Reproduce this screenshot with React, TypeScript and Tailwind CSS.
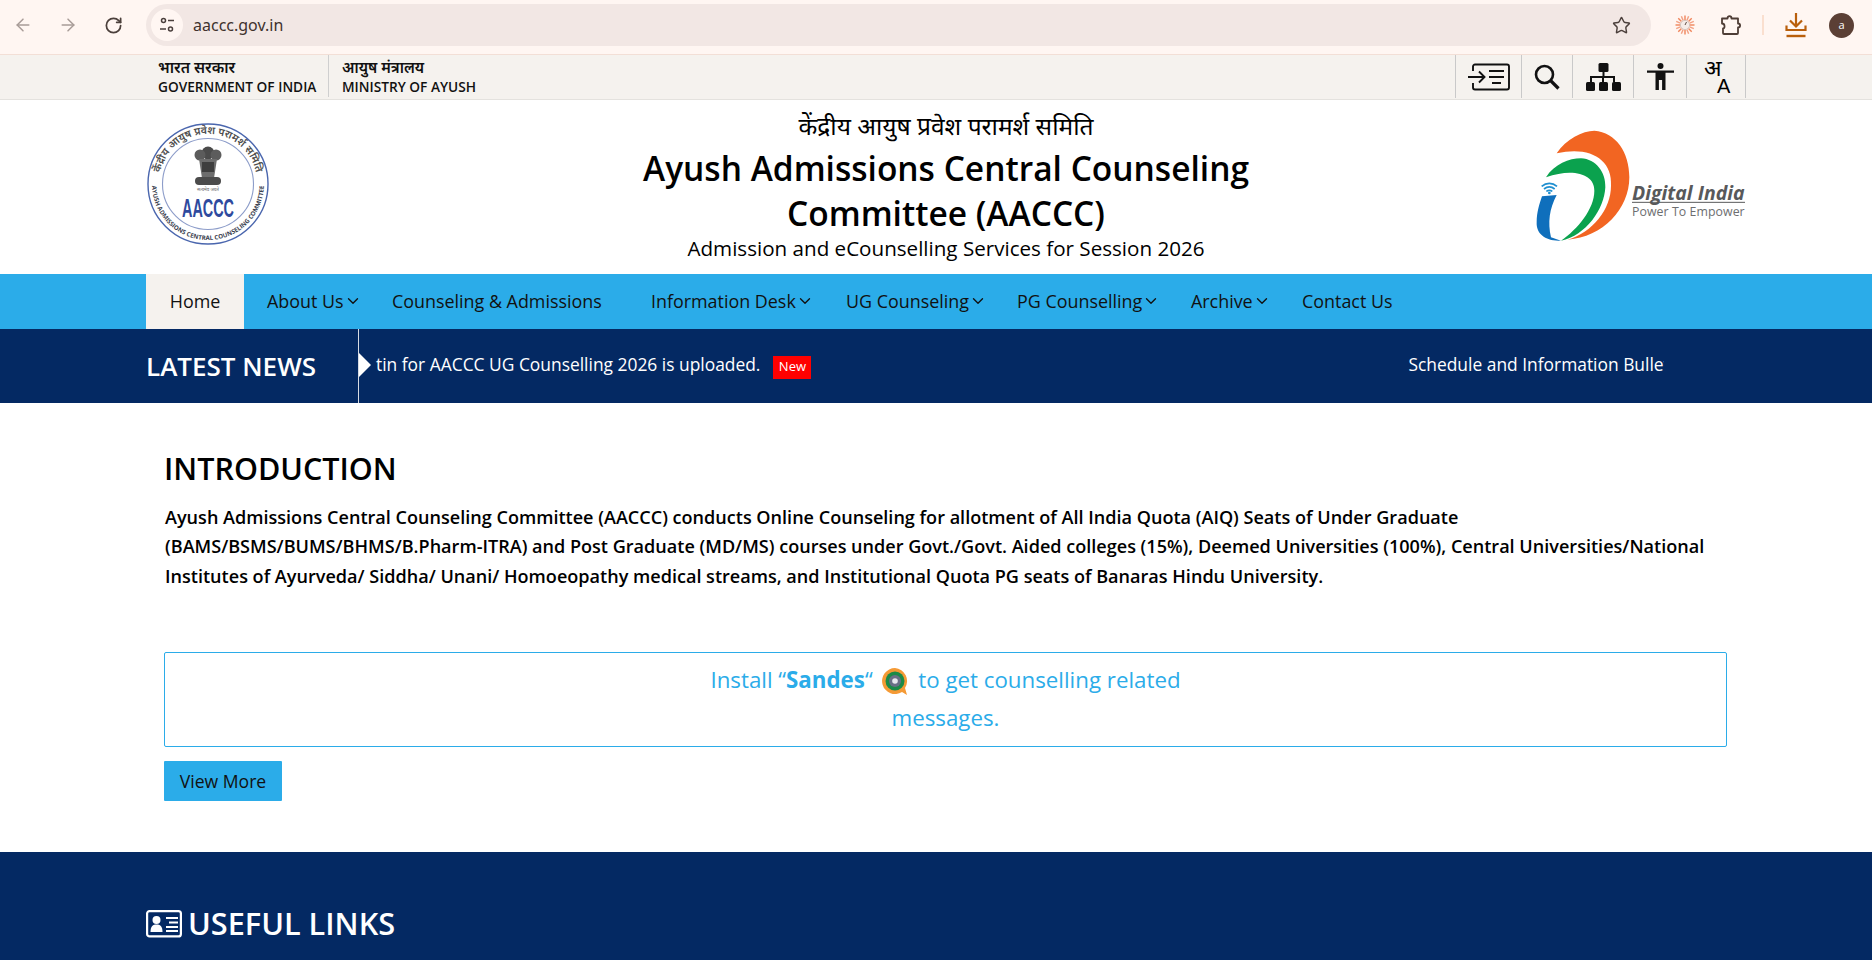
import { ArrowLeft, ArrowRight, RotateCw, Star, ChevronDown } from "lucide-react";

const font = { fontFamily: '"Open Sans","Noto Sans",sans-serif' };

function SiteTune() {
  return (
    <svg width="16" height="16" viewBox="0 0 16 16" fill="none" stroke="#4a3f3c" strokeWidth="1.5">
      <circle cx="4.5" cy="3.5" r="2" />
      <path d="M9 3.5h6M1 12h6" />
      <circle cx="11.5" cy="12" r="2" />
    </svg>
  );
}

function Sun() {
  const rays = Array.from({ length: 16 }, (_, i) => i * 22.5);
  return (
    <svg width="22" height="22" viewBox="0 0 22 22">
      {rays.map((r) => (
        <line key={r} x1="11" y1="1.5" x2="11" y2="6" stroke={r % 45 === 0 ? "#f0845a" : "#f3a184"} strokeWidth="1.4" transform={`rotate(${r} 11 11)`} />
      ))}
      <circle cx="11" cy="11" r="4.6" fill="#f5ece8" stroke="#c9b8b0" strokeWidth="0.8" />
      <path d="M11 11l1.5-3" stroke="#5d4a42" strokeWidth="1" />
    </svg>
  );
}

function Puzzle() {
  return (
    <svg width="22" height="22" viewBox="0 0 22 22" fill="none" stroke="#4e3d36" strokeWidth="1.8" strokeLinejoin="round">
      <path d="M2 4.5h5.5c0-3.2 4-3.2 4 0H18v5c2.8 0 2.8 4 0 4V19a1 1 0 0 1-1 1H4a1 1 0 0 1-1-1v-4.5c2.2 0 2.2-5-1-5z" />
    </svg>
  );
}

function Download() {
  return (
    <svg width="22" height="26" viewBox="0 0 22 26" fill="none" stroke="#b95f0c" strokeWidth="2.2">
      <path d="M11 1v13M5 8.5l6 6 6-6M1.5 13.5v4.5h19v-4.5" />
      <path d="M1.5 24h19" strokeWidth="2.4" />
    </svg>
  );
}

function SkipIcon() {
  return (
    <svg width="42" height="28" viewBox="0 0 42 28" fill="none" stroke="#111" strokeWidth="1.9">
      <path d="M5 8V3.5A2 2 0 0 1 7 1.5h32a2 2 0 0 1 2 2v21a2 2 0 0 1-2 2H7a2 2 0 0 1-2-2V20" />
      <path d="M0 14h16M11 8.5l5.5 5.5-5.5 5.5M21 8h15M21 14h15M24 20h9" />
    </svg>
  );
}

function SearchIcon() {
  return (
    <svg width="26" height="26" viewBox="0 0 26 26" fill="none" stroke="#111" strokeWidth="2.6">
      <circle cx="10.5" cy="10.5" r="8.5" />
      <path d="M16.5 16.5l8 8" strokeWidth="3.2" />
    </svg>
  );
}

function SitemapIcon() {
  return (
    <svg width="35" height="28" viewBox="0 0 35 28" fill="#111">
      <rect x="12.5" y="0" width="10" height="9" rx="1.5" />
      <rect x="0" y="19" width="9" height="9" rx="1.5" />
      <rect x="13" y="19" width="9" height="9" rx="1.5" />
      <rect x="26" y="19" width="9" height="9" rx="1.5" />
      <path d="M16.5 9h2v4h10.5v6h-2v-4h-9v4h-2v-4H6v4H4v-6h12.5z" />
    </svg>
  );
}

function AccessIcon() {
  return (
    <svg width="27" height="28" viewBox="0 0 27 28" fill="#111">
      <circle cx="13.5" cy="3" r="3" />
      <path d="M0 7.5h27v2.2h-8.5V27h-3.4V17h-3.2v10H8.500V9.700H0z" />
    </svg>
  );
}

function Seal() {
  return (
    <svg width="122" height="122" viewBox="0 0 122 122">
      <circle cx="61" cy="61" r="60" fill="#fff" stroke="#4a66ae" strokeWidth="1.4" />
      <circle cx="61" cy="61" r="45.500" fill="#fff" stroke="#8c9cc9" strokeWidth="1.1" />
      <defs>
        <path id="sealTop" d="M14 46a49 49 0 0 1 94 0" />
        <path id="sealBottom" d="M6.100 50A56 56 0 1 0 115.900 50" />
      </defs>
      <text fontSize="10.500" fill="#4d4d4d" fontFamily='"Noto Sans","Open Sans",sans-serif' fontWeight="600">
        <textPath href="#sealTop" startOffset="50%" textAnchor="middle">केंद्रीय आयुष प्रवेश परामर्श समिति</textPath>
      </text>
      <text fontSize="6.200" fill="#3b3f50" fontFamily='"Open Sans",sans-serif' fontWeight="700">
        <textPath href="#sealBottom" startOffset="50%" textAnchor="middle">AYUSH ADMISSIONS CENTRAL COUNSELING COMMITTEE</textPath>
      </text>
      <g fill="#4b4b4b">
        <circle cx="61" cy="30" r="6.500" />
        <circle cx="53" cy="32" r="5.500" fill="#5c5c5c" />
        <circle cx="69" cy="32" r="5.500" fill="#5c5c5c" />
        <path d="M52 36h18l-3 19h-12z" fill="#6d6d6d" />
        <rect x="48" y="54" width="26" height="8" rx="4" />
        <rect x="55" y="39" width="12" height="10" fill="#3e3e3e" />
      </g>
      <text x="61" y="68" textAnchor="middle" fontSize="4.500" fill="#666" fontFamily='"Noto Sans",sans-serif'>सत्यमेव जयते</text>
      <text x="61" y="94" textAnchor="middle" fontSize="25" fontWeight="700" fill="#2e4a9e" textLength="52" lengthAdjust="spacingAndGlyphs" fontFamily='"Liberation Sans",sans-serif'>AACCC</text>
    </svg>
  );
}

function DigitalIndia() {
  return (
    <svg width="220" height="120" viewBox="0 0 660 360">
      <path d="M62 73C90 30 140 5 175 5c65 5 105 65 105 140 0 95-80 180-185 187 75-22 130-92 130-162 5-80-65-120-163-97z" fill="#f26522" />
      <path d="M30 145c25-40 70-57 105-57 45 2 75 42 73 87-3 65-58 145-133 160 50-35 100-95 100-150 2-50-65-70-145-40z" fill="#0ba24e" />
      <path d="M18 202l44-4c-22 42-27 82-17 127l30 10c-45 3-75-20-73-55 0-30 8-55 16-78z" fill="#0f6fbc" />
      <g fill="none" stroke="#1f8fd0" strokeWidth="5">
        <path d="M17 172c14-12 32-12 46 0M24 180c10-8 22-8 32 0M31 187c6-4 12-4 18 0" />
      </g>
      <circle cx="40" cy="192" r="4" fill="#1f8fd0" />
      <text x="288" y="213" fontSize="58" fontWeight="700" fontStyle="italic" fill="#58595b" textLength="338" lengthAdjust="spacingAndGlyphs" fontFamily='"Open Sans",sans-serif'>Digital India</text>
      <line x1="288" y1="220" x2="627" y2="220" stroke="#58595b" strokeWidth="3" />
      <text x="288" y="261" fontSize="37" fill="#6d6e70" textLength="338" fontFamily='"Open Sans",sans-serif'>Power To Empower</text>
    </svg>
  );
}

function SandesIcon() {
  return (
    <svg width="28" height="30" viewBox="0 0 28 30" className="inline-block align-middle mx-[3px]">
      <path d="M14 1a13 13 0 1 0 7 24l5 3-2-7A13 13 0 0 0 14 1z" fill="#f59a35" />
      <circle cx="14" cy="14" r="9.500" fill="#1c8a48" />
      <circle cx="14" cy="14" r="6" fill="#6a6f86" />
      <circle cx="14" cy="14" r="2.800" fill="#e9e9ef" />
    </svg>
  );
}

function IdIcon() {
  return (
    <svg width="36" height="28" viewBox="0 0 36 28" fill="none">
      <rect x="1.100" y="1.100" width="33.800" height="25.300" rx="2.500" stroke="#fff" strokeWidth="2.200" />
      <circle cx="10.500" cy="10" r="4" fill="#fff" />
      <path d="M4.500 22c0-6 2.500-7.500 6-7.500s6 1.500 6 7.500z" fill="#fff" />
      <path d="M20 8h12M23 12.500h9M20 17h12M20 21h12" stroke="#fff" strokeWidth="2" />
    </svg>
  );
}

const navItems: [string, boolean, string][] = [
  ["About Us", true, "w-[125px]"],
  ["Counseling & Admissions", false, "w-[259px]"],
  ["Information Desk", true, "w-[195px]"],
  ["UG Counseling", true, "w-[171px]"],
  ["PG Counselling", true, "w-[174px]"],
  ["Archive", true, "w-[111px]"],
  ["Contact Us", false, ""],
];

function Sep() {
  return <div className="w-px h-full bg-[#c9c9c9]" />;
}

export default function App() {
  return (
    <div className="w-[1872px] h-[960px] overflow-hidden bg-white text-black" style={font}>
      <div className="h-[55px] bg-[#fff6f2] border-b border-[#f3dfd6] flex items-center pb-[4px] text-[#6b5b55]">
        <div className="flex items-center w-[146px] pl-[13px] shrink-0">
          <ArrowLeft size={20} strokeWidth={1.8} className="text-[#a89c98]" />
          <ArrowRight size={20} strokeWidth={1.8} className="ml-[25px] text-[#a89c98]" />
          <RotateCw size={19} strokeWidth={2.2} className="ml-[26px] text-[#4c403c]" />
        </div>
        <div className="w-[1505px] h-[42px] rounded-full bg-[#f2e7e4] flex items-center pl-[5px] pr-[20px] shrink-0">
          <div className="w-8 h-8 rounded-full bg-[#fff6f2] flex items-center justify-center">
            <SiteTune />
          </div>
          <span className="ml-[10px] text-[16px] text-[#40322d]" style={{ fontFamily: '"Noto Sans",sans-serif' }}>aaccc.gov.in</span>
          <Star size={19} strokeWidth={1.8} className="ml-auto text-[#4c403c]" />
        </div>
        <div className="flex items-center pl-[23px]">
          <Sun />
          <div className="ml-[24px]"><Puzzle /></div>
          <div className="ml-[20px] w-[2px] h-5 bg-[#fadfcf]" />
          <div className="ml-[21px]"><Download /></div>
          <div className="ml-[22px] w-[25px] h-[25px] rounded-full bg-[#5b3f35] text-white text-[11px] flex items-center justify-center">a</div>
        </div>
      </div>

      <div className="h-[45px] bg-[#f5f2ee] border-b border-[#e4e2de] pl-[158px] flex">
        <div className="w-[171px] flex flex-col text-[13.700px] leading-[19px] font-semibold pt-[3px] border-r border-[#cfcfcf] mb-[2px] text-[#111]">
          <span className="text-[15.500px]" style={{ fontFamily: '"Noto Sans","Open Sans",sans-serif' }}>भारत सरकार</span>
          <span className="whitespace-nowrap">GOVERNMENT OF INDIA</span>
        </div>
        <div className="ml-[13px] flex flex-col text-[13.700px] leading-[19px] font-semibold pt-[3px] text-[#111]">
          <span className="text-[15.200px]" style={{ fontFamily: '"Noto Sans","Open Sans",sans-serif' }}>आयुष मंत्रालय</span>
          <span>MINISTRY OF AYUSH</span>
        </div>
        <div className="ml-auto mr-[126px] flex h-[43px]">
          <Sep />
          <div className="w-[65px] flex items-center justify-center"><SkipIcon /></div>
          <Sep />
          <div className="w-[50px] flex items-center justify-center"><SearchIcon /></div>
          <Sep />
          <div className="w-[60px] flex items-center justify-center"><SitemapIcon /></div>
          <Sep />
          <div className="w-[52px] flex items-center justify-center"><AccessIcon /></div>
          <Sep />
          <div className="w-[58px] relative leading-none">
            <span className="absolute left-[17px] top-[1px] text-[23px] leading-none" style={{ fontFamily: '"Noto Sans",sans-serif' }}>अ</span>
            <span className="absolute left-[30px] top-[21px] text-[20px] leading-none font-normal" style={{ fontFamily: '"Liberation Sans",sans-serif' }}>A</span>
          </div>
          <Sep />
        </div>
      </div>

      <div className="h-[174px] pl-[147px] flex items-start">
        <div className="w-[122px] pt-[23px] shrink-0"><Seal /></div>
        <div className="w-[800px] ml-[277px] text-center pt-[9px] shrink-0">
          <div className="text-[24.500px] leading-[34px]" style={{ fontFamily: '"Noto Sans","Open Sans",sans-serif' }}>केंद्रीय आयुष प्रवेश परामर्श समिति</div>
          <div className="text-[33.500px] leading-[45px] font-semibold w-[640px] mx-auto mt-[3px]">Ayush Admissions Central Counseling Committee (AACCC)</div>
          <div className="text-[20.600px] leading-[24px] font-medium">Admission and eCounselling Services for Session 2026</div>
        </div>
        <div className="ml-[190px] pt-[29px] shrink-0"><DigitalIndia /></div>
      </div>

      <div className="h-[55px] bg-[#2bace9] pl-[146px] flex items-stretch text-[17.900px] font-medium text-[#111]">
        <div className="w-[98px] bg-[#f5f2ee] flex items-center justify-center">Home</div>
        <div className="flex items-center pl-[23px]">
          {navItems.map(([label, chev, w]) => (
            <div key={label} className={`flex items-center whitespace-nowrap ${w}`}>
              {label}
              {chev && <ChevronDown size={18} strokeWidth={1.8} />}
            </div>
          ))}
        </div>
      </div>

      <div className="h-[74px] bg-[#042963] pl-[146px] flex text-white">
        <div className="w-[212px] flex items-center text-[26px] font-semibold leading-none shrink-0">LATEST NEWS</div>
        <div className="relative w-[1306px] border-l border-[#d7dbe3] flex items-center pl-[17px] overflow-hidden whitespace-nowrap text-[17.400px] shrink-0">
          <div className="absolute left-0 top-[24px] w-0 h-0 border-y-[12px] border-y-transparent border-l-[12px] border-l-white" />
          <span className="pb-[3px]">tin for AACCC UG Counselling 2026 is uploaded.</span>
          <span className="ml-[13px] w-[38px] h-[23px] bg-[#ff0000] text-[13px] flex items-center justify-center shrink-0 mt-[2px]">New</span>
          <span className="ml-[597px] pb-[3px]">Schedule and Information Bulletin for AACCC</span>
        </div>
      </div>

      <div className="h-[449px] pl-[164px] pr-[145px] pt-[45px] flex flex-col items-start">
        <h2 className="text-[30.500px] leading-[40px] font-semibold">INTRODUCTION</h2>
        <p className="mt-[15px] ml-px text-[18.070px] leading-[29.300px] font-semibold whitespace-nowrap">
          Ayush Admissions Central Counseling Committee (AACCC) conducts Online Counseling for allotment of All India Quota (AIQ) Seats of Under Graduate<br />
          (BAMS/BSMS/BUMS/BHMS/B.Pharm-ITRA) and Post Graduate (MD/MS) courses under Govt./Govt. Aided colleges (15%), Deemed Universities (100%), Central Universities/National<br />
          Institutes of Ayurveda/ Siddha/ Unani/ Homoeopathy medical streams, and Institutional Quota PG seats of Banaras Hindu University.
        </p>
        <div className="mt-[61px] w-[1563px] h-[95px] border border-[#2bace9] rounded-[2px] flex justify-center pt-[8px] text-[#2bace9] text-[22.300px] leading-[38px]">
          <div className="w-[520px] text-center">
            Install “<b className="font-bold">Sandes</b>“ <SandesIcon /> to get counselling related messages.
          </div>
        </div>
        <button className="mt-[14px] w-[118px] h-10 bg-[#2bace9] rounded-[1px] text-[17.600px] text-[#111]">View More</button>
      </div>

      <div className="h-[108px] bg-[#042963] pl-[146px] pt-[53px] flex items-start text-white">
        <div className="pt-[5px]"><IdIcon /></div>
        <div className="ml-[6px] text-[30.700px] leading-[36px] font-semibold">USEFUL LINKS</div>
      </div>
    </div>
  );
}
